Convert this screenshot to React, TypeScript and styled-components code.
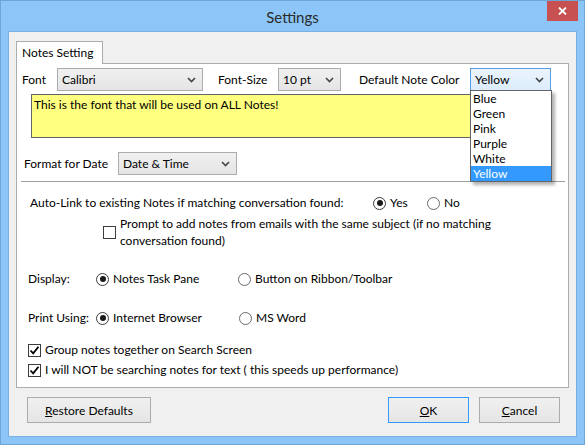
import styled, { createGlobalStyle } from "styled-components";

const GlobalStyle = createGlobalStyle`
  html, body { margin: 0; padding: 0; background: #ffffff; }
  body {
    font-family: Lato, "Liberation Sans", sans-serif;
    font-size: 12px;
    color: #000;
  }
`;

const Window = styled.div`
  width: 585px;
  height: 445px;
  box-sizing: border-box;
  background: #8cc6f8;
  border: 1px solid #6fa4d6;
  padding: 0 7px 7px;
  display: flex;
  flex-direction: column;
`;

const TitleBar = styled.div`
  height: 30px;
  display: grid;
  grid-template-columns: 1fr auto 1fr;
  align-items: center;
`;

const Title = styled.div`
  grid-column: 2;
  font-size: 15px;
  color: #2b2b2b;
  margin-top: 1px;
`;

const CloseButton = styled.div`
  grid-column: 3;
  justify-self: end;
  align-self: start;
  width: 31px;
  height: 20px;
  margin-right: -1px;
  background: #c75050;
  display: flex;
  align-items: center;
  justify-content: center;
`;

const Client = styled.div`
  flex: 1;
  background: #f0f0f0;
  border: 1px solid #7aafe2;
  padding: 9px 7px 0;
  display: flex;
  flex-direction: column;
`;

const TabStrip = styled.div`
  display: flex;
`;

const Tab = styled.div`
  width: 87px;
  height: 23px;
  box-sizing: border-box;
  padding: 3px 0 0 5px;
  background: #fff;
  border: 1px solid #acacac;
  border-bottom: none;
  margin-bottom: -1px;
  position: relative;
  z-index: 1;
`;

const Panel = styled.div`
  width: 553px;
  height: 325px;
  box-sizing: border-box;
  background: #fff;
  border: 1px solid #acacac;
  display: flex;
  flex-direction: column;
`;

const Row = styled.div<{ $top: number; $indent: number }>`
  display: flex;
  align-items: center;
  margin-top: ${(p) => p.$top}px;
  padding-left: ${(p) => p.$indent}px;
  line-height: 16px;
`;

const Label = styled.span<{ $w: number; $pad?: number }>`
  width: ${(p) => p.$w}px;
  padding-left: ${(p) => p.$pad ?? 0}px;
  box-sizing: border-box;
  flex: none;
  white-space: nowrap;
`;

const Combo = styled.div<{ $w: number; $open?: boolean }>`
  position: relative;
  width: ${(p) => p.$w}px;
  height: 23px;
  box-sizing: border-box;
  flex: none;
  display: flex;
  align-items: center;
  padding: 0 0 0 4px;
  border: 1px solid ${(p) => (p.$open ? "#569de5" : "#acacac")};
  background: ${(p) =>
    p.$open
      ? "linear-gradient(#ecf4fc, #dcecfc)"
      : "linear-gradient(#f0f0f0, #e5e5e5)"};
`;

const ComboText = styled.span`
  flex: 1;
`;

const Arrow = styled.svg`
  width: 9px;
  height: 6px;
  margin-right: 6px;
`;

const DropList = styled.div`
  position: absolute;
  top: 100%;
  left: -1px;
  width: 82px;
  box-sizing: border-box;
  background: #fff;
  border: 1px solid #646464;
  box-shadow: 3px 3px 3px rgba(0, 0, 0, 0.3);
  z-index: 5;
`;

const DropItem = styled.div<{ $sel?: boolean }>`
  height: 15px;
  line-height: 16px;
  padding-left: 2px;
  background: ${(p) => (p.$sel ? "#3399ff" : "transparent")};
  color: ${(p) => (p.$sel ? "#fff" : "#000")};
`;

const NotePreview = styled.div`
  margin: 3px 0 0 14px;
  width: 520px;
  height: 44px;
  box-sizing: border-box;
  padding: 2px 0 0 2px;
  background: #ffff80;
  border: 1px solid #646464;
  font-size: 12px;
`;

const Separator = styled.div`
  margin: 6px 0 0 4px;
  width: 544px;
  height: 1px;
  background: #a0a0a0;
`;

const Option = styled.label<{ $w: number }>`
  width: ${(p) => p.$w}px;
  flex: none;
  display: flex;
  align-items: center;
  gap: 4px;
  white-space: nowrap;
`;

const RadioCircle = styled.span<{ $on?: boolean }>`
  width: 13px;
  height: 13px;
  box-sizing: border-box;
  border-radius: 50%;
  border: 1px solid ${(p) => (p.$on ? "#3c3c3c" : "#6a6a6a")};
  background: #fff;
  display: flex;
  align-items: center;
  justify-content: center;
  flex: none;

  &::after {
    content: "";
    width: 6px;
    height: 6px;
    border-radius: 50%;
    background: #1a1a1a;
    display: ${(p) => (p.$on ? "block" : "none")};
  }
`;

const CheckBox = styled.span`
  width: 13px;
  height: 13px;
  box-sizing: border-box;
  border: 1px solid #3c3c3c;
  background: #fff;
  flex: none;
  display: flex;
  align-items: center;
  justify-content: center;
`;

const CheckLabel = styled.span`
  margin-left: 4px;
  white-space: nowrap;
`;

const PromptText = styled.span`
  margin-left: 4px;
  line-height: 17px;
`;

const Footer = styled.div`
  margin: 9px 0 0 11px;
  width: 533px;
  display: flex;
  gap: 10px;
`;

const Button = styled.div<{ $w: number; $default?: boolean }>`
  width: ${(p) => p.$w}px;
  height: 26px;
  box-sizing: border-box;
  border: 1px solid ${(p) => (p.$default ? "#3399ff" : "#acacac")};
  background: linear-gradient(#f0f0f0, #e5e5e5);
  display: flex;
  align-items: center;
  justify-content: center;
`;

const Spacer = styled.div`
  flex: 1;
`;

function Chevron() {
  return (
    <Arrow viewBox="0 0 9 6">
      <path d="M1 1 L4.5 4.5 L8 1" fill="none" stroke="#444" strokeWidth="1.6" />
    </Arrow>
  );
}

function Tick() {
  return (
    <svg width="11" height="11" viewBox="0 0 11 11">
      <path d="M1.5 5.5 L4.2 8.3 L9.5 1.8" fill="none" stroke="#000" strokeWidth="1.8" />
    </svg>
  );
}

function Radio({ on, label, w }: { on?: boolean; label: string; w: number }) {
  return (
    <Option $w={w}>
      <RadioCircle $on={on} />
      <span>{label}</span>
    </Option>
  );
}

const colors = ["Blue", "Green", "Pink", "Purple", "White", "Yellow"];

export default function App() {
  return (
    <>
      <GlobalStyle />
      <Window>
        <TitleBar>
          <Title>Settings</Title>
          <CloseButton>
            <svg width="9" height="8" viewBox="0 0 9 8">
              <path d="M1 0.5 L8 7.5 M8 0.5 L1 7.5" stroke="#fff" strokeWidth="1.8" />
            </svg>
          </CloseButton>
        </TitleBar>
        <Client>
          <TabStrip>
            <Tab>Notes Setting</Tab>
          </TabStrip>
          <Panel>
            <Row $top={4} $indent={5}>
              <Label $w={35}>Font</Label>
              <Combo $w={146}>
                <ComboText>Calibri</ComboText>
                <Chevron />
              </Combo>
              <Label $w={75} $pad={15}>Font-Size</Label>
              <Combo $w={63}>
                <ComboText>10 pt</ComboText>
                <Chevron />
              </Combo>
              <Label $w={129} $pad={18}>Default Note Color</Label>
              <Combo $w={81} $open>
                <ComboText>Yellow</ComboText>
                <Chevron />
                <DropList>
                  {colors.map((c) => (
                    <DropItem key={c} $sel={c === "Yellow"}>
                      {c}
                    </DropItem>
                  ))}
                </DropList>
              </Combo>
            </Row>
            <NotePreview>This is the font that will be used on ALL Notes!</NotePreview>
            <Row $top={14} $indent={7}>
              <Label $w={94}>Format for Date</Label>
              <Combo $w={119}>
                <ComboText>Date &amp; Time</ComboText>
                <Chevron />
              </Combo>
            </Row>
            <Separator />
            <Row $top={13} $indent={13}>
              <Label $w={343}>Auto-Link to existing Notes if matching conversation found:</Label>
              <Radio on label="Yes" w={54} />
              <Radio label="No" w={40} />
            </Row>
            <Row $top={4} $indent={86}>
              <CheckBox />
              <PromptText>
                Prompt to add notes from emails with the same subject (if no matching
                <br />
                conversation found)
              </PromptText>
            </Row>
            <Row $top={22} $indent={11}>
              <Label $w={68}>Display:</Label>
              <Radio on label="Notes Task Pane" w={142} />
              <Radio label="Button on Ribbon/Toolbar" w={180} />
            </Row>
            <Row $top={23} $indent={11}>
              <Label $w={68}>Print Using:</Label>
              <Radio on label="Internet Browser" w={143} />
              <Radio label="MS Word" w={80} />
            </Row>
            <Row $top={16} $indent={11}>
              <CheckBox>
                <Tick />
              </CheckBox>
              <CheckLabel>Group notes together on Search Screen</CheckLabel>
            </Row>
            <Row $top={4} $indent={11}>
              <CheckBox>
                <Tick />
              </CheckBox>
              <CheckLabel>I will NOT be searching notes for text ( this speeds up performance)</CheckLabel>
            </Row>
          </Panel>
          <Footer>
            <Button $w={124}>
              <span>
                <u>R</u>estore Defaults
              </span>
            </Button>
            <Spacer />
            <Button $w={81} $default>
              <span>
                <u>O</u>K
              </span>
            </Button>
            <Button $w={81}>
              <span>
                <u>C</u>ancel
              </span>
            </Button>
          </Footer>
        </Client>
      </Window>
    </>
  );
}
